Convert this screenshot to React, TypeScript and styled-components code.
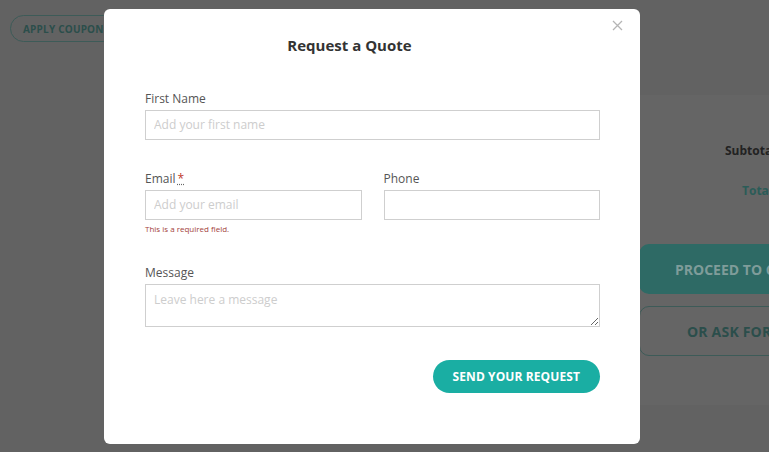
import React from 'react';
import styled, { createGlobalStyle } from 'styled-components';

const GlobalStyle = createGlobalStyle`
  html, body {
    margin: 0;
    padding: 0;
    background: #626262;
    overflow: hidden;
  }
  * {
    box-sizing: border-box;
  }
`;

const FONT = `"Open Sans", "DejaVu Sans", sans-serif`;

// dimmed cart page behind the dialog
const Page = styled.div`
  width: 769px;
  height: 452px;
  font-family: ${FONT};
  display: grid;
  grid-template-rows: 95px 1fr;
  overflow: hidden;
`;

const TopBar = styled.div`
  padding: 15px 10px;
`;

const OutlineButton = styled.button<{ $wide?: boolean }>`
  font-family: ${FONT};
  height: ${({ $wide }) => ($wide ? '50px' : '27px')};
  width: ${({ $wide }) => ($wide ? '260px' : 'auto')};
  padding: 0 12px;
  border: 1px solid #3d5b58;
  border-radius: 26px;
  background: transparent;
  color: #2b4e4b;
  font-weight: 700;
  font-size: ${({ $wide }) => ($wide ? '14px' : '10px')};
  letter-spacing: 0.2px;
`;

const Bottom = styled.div`
  display: flex;
  justify-content: flex-end;
  align-items: flex-start;
`;

const Totals = styled.aside`
  width: 160px;
  height: 310px;
  margin-right: -30px;
  background: #656565;
  padding: 47px 0 0 0;
  display: flex;
  flex-direction: column;
`;

const TotalLine = styled.div<{ $teal?: boolean }>`
  font-size: 12px;
  font-weight: 700;
  color: ${({ $teal }) => ($teal ? '#2b5c58' : '#222')};
  padding-left: ${({ $teal }) => ($teal ? '103px' : '86px')};
  margin-bottom: ${({ $teal }) => ($teal ? '25px' : '23px')};
`;

const Proceed = styled.button`
  font-family: ${FONT};
  margin-top: 20px;
  height: 50px;
  width: 260px;
  border: none;
  border-radius: 10px;
  background: #2e6a65;
  color: #7f9c9a;
  font-weight: 700;
  font-size: 14px;
  text-align: left;
  padding-left: 36px;
`;

const AskButton = styled(OutlineButton)`
  margin-top: 12px;
  border-radius: 10px;
  text-align: left;
  padding-left: 47px;
`;

// dialog
const Overlay = styled.div`
  position: fixed;
  inset: 0;
  display: flex;
  align-items: center;
  justify-content: center;
  padding-right: 25px;
`;

const Modal = styled.div`
  position: relative;
  width: 536px;
  height: 435px;
  background: #fff;
  border-radius: 6px;
  padding: 27px 40px 0 41px;
  font-family: ${FONT};
`;

const Close = styled.button`
  position: absolute;
  top: 10px;
  right: 16px;
  width: 14px;
  height: 14px;
  padding: 0;
  border: none;
  background: none;
  display: flex;
  align-items: center;
  justify-content: center;
`;

const Title = styled.h2`
  margin: 0 0 37px;
  padding-right: 46px;
  text-align: center;
  font-size: 15px;
  line-height: 18px;
  font-weight: 700;
  color: #333;
`;

const Form = styled.form`
  display: flex;
  flex-direction: column;
  gap: 31px;
`;

const Row = styled.div`
  display: grid;
  grid-template-columns: 1fr 1fr;
  gap: 22px;
`;

const Field = styled.div<{ $full?: boolean }>`
  display: flex;
  flex-direction: column;
  grid-column: ${({ $full }) => ($full ? '1 / -1' : 'auto')};
`;

const Label = styled.label`
  font-size: 12px;
  line-height: 16px;
  color: #555;
  margin-bottom: 3px;
`;

const Required = styled.span`
  color: #c0392b;
  margin-left: 2px;
  text-decoration: underline dotted #666;
`;

const Input = styled.input`
  height: 30px;
  border: 1px solid #cfcfcf;
  padding: 0 8px;
  font-family: ${FONT};
  font-size: 12px;
  color: #333;
  outline: none;
  &::placeholder {
    color: #cdcdcd;
  }
`;

const TextArea = styled.textarea`
  height: 43px;
  border: 1px solid #cfcfcf;
  padding: 6px 8px;
  font-family: ${FONT};
  font-size: 12px;
  color: #333;
  outline: none;
  resize: vertical;
  &::placeholder {
    color: #cdcdcd;
  }
`;

const ErrorText = styled.span`
  margin-top: 4px;
  font-size: 8px;
  line-height: 10px;
  color: #a3413a;
`;

const Actions = styled.div`
  display: flex;
  justify-content: flex-end;
  margin-top: 2px;
`;

const Submit = styled.button`
  height: 33px;
  padding: 0 20px;
  border: none;
  border-radius: 17px;
  background: #1aaea3;
  color: #fff;
  font-family: ${FONT};
  font-weight: 700;
  font-size: 12px;
  letter-spacing: 0.1px;
`;

export default function App() {
  return (
    <>
      <GlobalStyle />
      <Page>
        <TopBar>
          <OutlineButton>APPLY COUPON</OutlineButton>
        </TopBar>
        <Bottom>
          <Totals>
            <TotalLine>Subtotal</TotalLine>
            <TotalLine $teal>Total</TotalLine>
            <Proceed>PROCEED TO CHECKOUT</Proceed>
            <AskButton $wide>OR ASK FOR A QUOTE</AskButton>
          </Totals>
        </Bottom>
      </Page>
      <Overlay>
        <Modal>
          <Close aria-label="Close">
            <svg width="11" height="11" viewBox="0 0 11 11">
              <path d="M1 1 L10 10 M10 1 L1 10" stroke="#b5b5b5" strokeWidth="1.3" />
            </svg>
          </Close>
          <Title>Request a Quote</Title>
          <Form onSubmit={(e) => e.preventDefault()}>
            <Row>
              <Field $full>
                <Label>First Name</Label>
                <Input placeholder="Add your first name" />
              </Field>
            </Row>
            <Row>
              <Field>
                <Label>
                  Email<Required>*</Required>
                </Label>
                <Input placeholder="Add your email" />
                <ErrorText>This is a required field.</ErrorText>
              </Field>
              <Field>
                <Label>Phone</Label>
                <Input />
              </Field>
            </Row>
            <Row>
              <Field $full>
                <Label>Message</Label>
                <TextArea placeholder="Leave here a message" />
              </Field>
            </Row>
            <Actions>
              <Submit type="submit">SEND YOUR REQUEST</Submit>
            </Actions>
          </Form>
        </Modal>
      </Overlay>
    </>
  );
}
